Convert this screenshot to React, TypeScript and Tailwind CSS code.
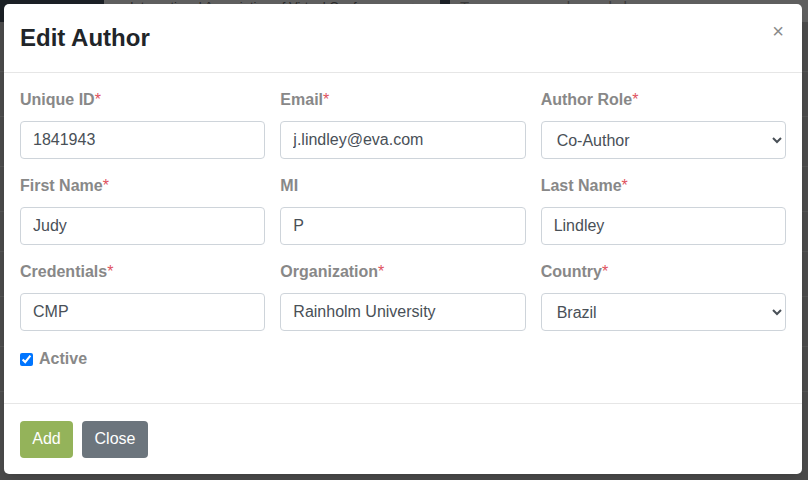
import React, { useState } from "react";

const fields = [
  [
    { label: "Unique ID", req: true, value: "1841943" },
    { label: "Email", req: true, value: "j.lindley@eva.com" },
    { label: "Author Role", req: true, value: "Co-Author", select: ["Author", "Co-Author", "Presenter"] },
  ],
  [
    { label: "First Name", req: true, value: "Judy" },
    { label: "MI", req: false, value: "P" },
    { label: "Last Name", req: true, value: "Lindley" },
  ],
  [
    { label: "Credentials", req: true, value: "CMP" },
    { label: "Organization", req: true, value: "Rainholm University" },
    { label: "Country", req: true, value: "Brazil", select: ["Argentina", "Brazil", "Canada"] },
  ],
];

function Field({ f }: { f: any }) {
  return (
    <div className="flex flex-col">
      <label className="text-[16px] font-bold text-[#888] leading-[18px] h-[18px] mb-[12px] whitespace-nowrap">
        {f.label}
        {f.req && <span className="text-[#e0525e] font-normal">*</span>}
      </label>
      {f.select ? (
        <select
          defaultValue={f.value}
          className="h-[38px] w-full rounded-[4px] border border-[#ced4da] bg-white pl-[11px] pr-2 text-[16px] text-[#495057] outline-none"
        >
          {f.select.map((o: string) => (
            <option key={o}>{o}</option>
          ))}
        </select>
      ) : (
        <input
          defaultValue={f.value}
          className="h-[38px] w-full rounded-[4px] border border-[#ced4da] bg-white px-[12px] text-[16px] text-[#495057] outline-none"
        />
      )}
    </div>
  );
}

export default function App() {
  const [active, setActive] = useState(true);

  return (
    <div
      className="relative w-[808px] h-[480px] overflow-hidden bg-[#4b4b4b]"
      style={{ fontFamily: "'Liberation Sans', Arial, sans-serif" }}
    >
      {/* dimmed page behind */}
      <div className="flex h-[22px] bg-[#1b2025]">
        <div className="w-[104px]" />
        <div className="w-[336px] bg-[#5f5f5f] text-[#2a2a2a] text-[13px] leading-[14px] pl-[26px] whitespace-nowrap">
          International Association of Virtual Conferences ▲
        </div>
        <div className="w-[10px]" />
        <div className="flex-1 bg-[#5f5f5f] text-[#3a3a3a] text-[15px] leading-[14px] pl-[10px] whitespace-nowrap">
          Type your search words here
        </div>
      </div>
      <div className="flex flex-col">
        {[50, 45, 50, 45, 40, 45, 50, 45].map((h, i) => (
          <div key={i} className="border-b border-[#555]" style={{ height: h }} />
        ))}
      </div>

      {/* modal */}
      <div className="absolute left-[4px] top-[4px] w-[798px] h-[470px] rounded-[5px] bg-white flex flex-col shadow-lg">
        <div className="flex items-start justify-between h-[69px] border-b border-[#e6e6e6] px-[16px]">
          <h2 className="text-[24px] font-bold text-[#212529] mt-[20px] leading-[28px]">Edit Author</h2>
          <button className="mt-[17px] mr-[2px] text-[#8a8a8a] text-[20px] leading-[20px]">×</button>
        </div>
        <div className="flex-1 px-[16px] pt-[18px] border-b border-[#e6e6e6]">
          <div className="flex flex-col gap-[18px]">
            {fields.map((row, i) => (
              <div key={i} className="grid grid-cols-3 gap-x-[15px]">
                {row.map((f) => (
                  <Field key={f.label} f={f} />
                ))}
              </div>
            ))}
          </div>
          <label className="flex items-center gap-[6px] mt-[16px]">
            <input
              type="checkbox"
              checked={active}
              onChange={(e) => setActive(e.target.checked)}
              className="w-[13px] h-[13px] accent-[#0075ff]"
            />
            <span className="text-[16px] font-bold text-[#888]">Active</span>
          </label>
        </div>
        <div className="h-[70px] flex items-center gap-[9px] px-[16px]">
          <button className="h-[37px] w-[53px] rounded-[4px] bg-[#94b35a] text-white text-[16px]">Add</button>
          <button className="h-[37px] w-[66px] rounded-[4px] bg-[#6c757d] text-white text-[16px]">Close</button>
        </div>
      </div>
    </div>
  );
}
